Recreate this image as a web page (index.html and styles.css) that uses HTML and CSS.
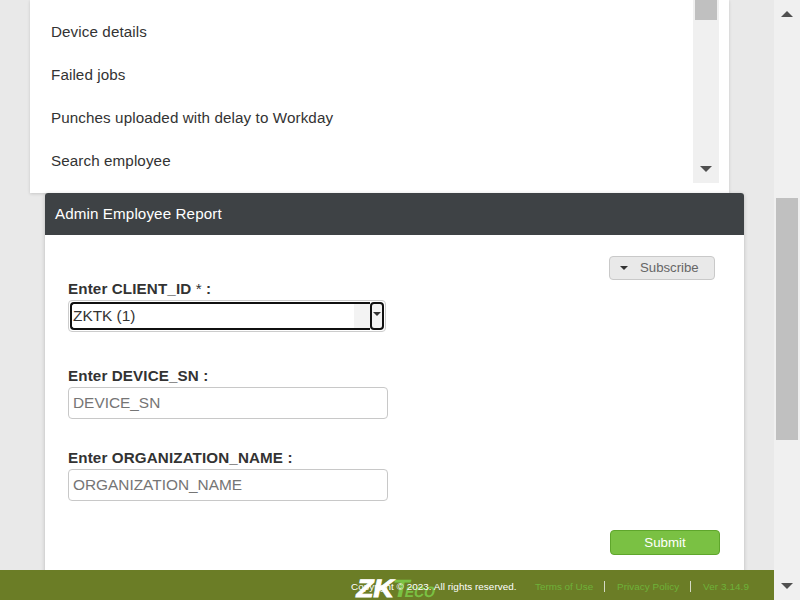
FILE: index.html
```html
<!DOCTYPE html>
<html lang="en">
<head>
<meta charset="utf-8">
<title>Admin Employee Report</title>
<link rel="stylesheet" href="styles.css">
</head>
<body>
<div class="viewport">
  <div class="page">
    <main class="content">
      <section class="list-card">
        <ul class="reports">
          <li>Device details</li>
          <li>Failed jobs</li>
          <li>Punches uploaded with delay to Workday</li>
          <li>Search employee</li>
        </ul>
        <div class="scroll list-scroll">
          <div class="thumb"></div>
          <svg class="arrow" width="12" height="6" viewBox="0 0 12 6"><path d="M0 0H12L6 6Z"/></svg>
        </div>
      </section>
      <section class="report-card">
        <h1>Admin Employee Report</h1>
        <form class="form">
          <div class="toolbar">
            <button type="button" class="subscribe"><svg width="8" height="4" viewBox="0 0 8 4"><path d="M0 0H8L4 4Z"/></svg><span>Subscribe</span></button>
          </div>
          <div class="field client">
            <label>Enter CLIENT_ID <span class="star">*</span> :</label>
            <div class="combo">
              <div class="combo-value">ZKTK (1)</div>
              <div class="combo-button"><svg width="8" height="4" viewBox="0 0 8 4"><path d="M0 0H8L4 4Z"/></svg></div>
            </div>
          </div>
          <div class="field device">
            <label>Enter DEVICE_SN :</label>
            <input type="text" placeholder="DEVICE_SN">
          </div>
          <div class="field organization">
            <label>Enter ORGANIZATION_NAME :</label>
            <input type="text" placeholder="ORGANIZATION_NAME">
          </div>
          <div class="actions"><button type="button" class="submit">Submit</button></div>
        </form>
      </section>
    </main>
    <footer class="footer">
      <svg class="logo" width="84" height="24" viewBox="0 0 84 24">
        <g transform="translate(0 20.5) skewX(-12)">
          <text class="te" x="37" y="0" font-size="25" textLength="17" lengthAdjust="spacingAndGlyphs">T</text>
          <text class="te" x="50" y="0" font-size="15" textLength="30" lengthAdjust="spacingAndGlyphs">ECO</text>
          <text class="zk" x="1" y="0" textLength="37" lengthAdjust="spacingAndGlyphs">ZK</text>
        </g>
      </svg>
      <span class="copyright">Copyright © 2023. All rights reserved.</span>
      <span class="link terms">Terms of Use</span>
      <span class="link privacy">Privacy Policy</span>
      <span class="link version">Ver 3.14.9</span>
    </footer>
  </div>
  <div class="scroll page-scroll">
    <svg class="arrow" width="12" height="6" viewBox="0 0 12 6"><path d="M0 6H12L6 0Z"/></svg>
    <div class="thumb"></div>
    <svg class="arrow" width="12" height="6" viewBox="0 0 12 6"><path d="M0 0H12L6 6Z"/></svg>
  </div>
</div>
</body>
</html>
```
FILE: styles.css
```css
* { box-sizing: border-box; }
body {
  margin: 0;
  font-family: "Liberation Sans", Arial, sans-serif;
  font-size: 15.2px;
  color: #333;
  overflow: hidden;
}
.viewport { display: flex; width: 800px; height: 600px; background: #e9e9e9; }
.page { width: 774px; display: flex; flex-direction: column; }
.content { height: 570px; overflow: hidden; }
.list-card {
  display: flex;
  justify-content: space-between;
  width: 699px;
  height: 193px;
  margin-left: 30px;
  padding-right: 10px;
  background: #fff;
  box-shadow: 0 1px 3px rgba(0, 0, 0, .15);
}
.reports { list-style: none; margin: 0; padding: 10px 0 0 21px; letter-spacing: .1px; }
.reports li { height: 43px; line-height: 43px; }
.scroll { width: 26px; background: #f0f0f0; display: flex; flex-direction: column; align-items: center; }
.thumb { width: 22px; background: #c0c0c0; }
.arrow { display: block; fill: #505050; }
.list-scroll { height: 183px; justify-content: space-between; padding-bottom: 11px; }
.list-scroll .thumb { height: 20px; }
.page-scroll { height: 600px; padding: 11px 0; }
.page-scroll .thumb { height: 242px; margin: 181px 0 143px; }
.report-card {
  width: 699px;
  height: 400px;
  margin-left: 45px;
  border-radius: 3px;
  background: #fff;
  position: relative;
  box-shadow: 0 1px 4px rgba(0, 0, 0, .2);
}
h1 {
  margin: 0;
  height: 42px;
  padding-left: 10px;
  line-height: 42px;
  font-size: 15.2px;
  font-weight: normal;
  letter-spacing: .1px;
  color: #fff;
  background: #3e4245;
  border-radius: 3px 3px 0 0;
}
.form { padding: 21px 24px 0 23px; }
.toolbar { display: flex; justify-content: flex-end; padding-right: 5px; height: 24px; }
button { font-family: inherit; padding: 0; }
.subscribe {
  display: flex;
  align-items: center;
  gap: 12px;
  width: 106px;
  height: 24px;
  padding: 0 0 1px 10px;
  border: 1px solid #c9c9c9;
  border-radius: 4px;
  background: #e9e9e9;
  color: #666;
  font-size: 13.2px;
}
.subscribe svg { fill: #333; }
.field { width: 320px; }
.field label { display: block; height: 17px; line-height: 17px; font-weight: bold; letter-spacing: .12px; white-space: nowrap; }
.star { font-weight: normal; }
.combo {
  display: flex;
  width: 318px;
  height: 32px;
  margin-top: 3px;
  padding: 1px;
  border: 1px solid #ccc;
  border-radius: 4px;
}
.combo-value {
  width: 300px;
  height: 28px;
  padding-left: 1px;
  line-height: 24px;
  font-size: 15.4px;
  border: 2px solid #101010;
  border-right: 0;
  border-radius: 4px 0 0 4px;
  background: linear-gradient(to right, #fff 282px, #f3f3f3 282px);
}
.combo-button {
  display: flex;
  justify-content: center;
  padding-top: 8px;
  width: 14px;
  height: 28px;
  border: 2px solid #101010;
  border-radius: 4px;
  background: #f3f3f3;
}
.combo-button svg { fill: #333; flex: none; }
.device { margin-top: 35px; }
.organization { margin-top: 30px; }
input {
  display: block;
  width: 320px;
  height: 32px;
  margin: 3px 0 0;
  padding: 0 4px;
  border: 1px solid #c8c8c8;
  border-radius: 4px;
  font: 15.4px "Liberation Sans", Arial, sans-serif;
}
input::placeholder { color: #757575; }
.actions { display: flex; justify-content: flex-end; margin-top: 29px; }
.submit {
  width: 110px;
  height: 25px;
  border: 1px solid #5fa62c;
  border-radius: 4px;
  background: #7ac143;
  color: #fff;
  font-size: 13.33px;
}
.footer {
  display: flex;
  align-items: center;
  height: 30px;
  padding: 3px 0 0 351px;
  background: #6b7d26;
  position: relative;
  font-size: 9.9px;
  line-height: 11px;
  white-space: nowrap;
}
.copyright { position: relative; width: 184px; color: #fff; letter-spacing: .05px; }
.link { color: #6eb239; }
.terms { width: 70px; border-right: 1px solid #d5d9c5; }
.privacy { width: 86px; padding-left: 12px; border-right: 1px solid #d5d9c5; letter-spacing: .05px; }
.version { padding-left: 12px; letter-spacing: .1px; }
.logo { position: absolute; left: 354px; top: 6px; }
.logo text { font-family: "Liberation Sans", Arial, sans-serif; font-weight: bold; }
.zk { font-size: 25px; fill: #fff; stroke: #fff; stroke-width: 1px; }
.te { fill: #7ac143; }
```
